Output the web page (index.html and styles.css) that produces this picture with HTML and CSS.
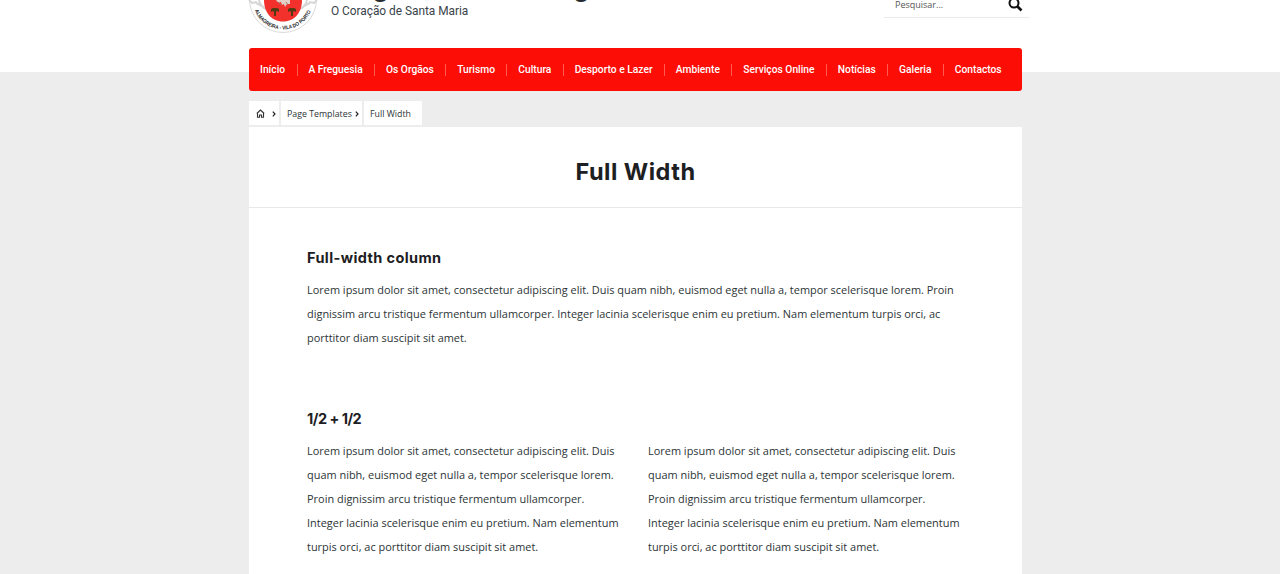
FILE: index.html
```html
<!DOCTYPE html>
<html lang="pt">
<head>
<meta charset="utf-8">
<title>Full Width</title>
<link rel="stylesheet" href="styles.css">
</head>
<body>
<header class="header">
  <div class="wrap brand-row">
    <svg class="crest" width="70" height="36" viewBox="0 0 70 36">
      <circle cx="35" cy="-1" r="33.5" fill="#fff" stroke="#dadada" stroke-width="1"/>
      <path d="M11 0c1 7 6 8 8 10M59 0c-1 7-6 8-8 10M8 3l6 3M62 3l-6 3M1 0l3 3 5-1M69 0l-3 3-5-1" fill="none" stroke="#d6d6d6" stroke-width="2"/>
      <path d="M16 0h38c0 12-7 21.500-19 21.500S16 12 16 0z" fill="#f2302c"/>
      <path d="M28 0c1 2 3 3 5 2l1 3 2-1 1 3 2-3 3 0V0z" fill="#e3cfc8"/>
      <path d="M30 2l3 3M38 2l2 3" stroke="#98766c"/>
      <g fill="#533b13"><path d="M23 9l2-1h4l2 1v3l-2-1-1 1v4h-2v-4l-1-1-2 1zM40 9l2-1h4l2 1v3l-2-1-1 1v4h-2v-4l-1-1-2 1z"/></g>
      <path id="motto" d="M6.800 10.500A30.500 30.500 0 0 0 64 8.500" fill="none"/>
      <text class="motto"><textPath href="#motto" textLength="71" lengthAdjust="spacingAndGlyphs">ALMAGREIRA - VILA DO PORTO</textPath></text>
    </svg>
    <div class="brand">
      <div class="site-name">Freguesia de Almagreira</div>
      <div class="tagline">O Coração de Santa Maria</div>
    </div>
    <form class="search">
      <span>Pesquisar...</span>
      <svg width="15" height="15" viewBox="0 0 15 15" fill="none" stroke="#111"><circle cx="6" cy="6" r="4.500" stroke-width="2"/><path d="M9.500 9.500l4 4" stroke-width="2.600"/></svg>
    </form>
  </div>
</header>
<main class="wrap">
  <nav class="nav">
    <a>Início</a><a>A Freguesia</a><a>Os Orgãos</a><a>Turismo</a><a>Cultura</a><a>Desporto e Lazer</a><a>Ambiente</a><a>Serviços Online</a><a>Notícias</a><a>Galeria</a><a>Contactos</a>
  </nav>
  <div class="crumbs">
    <span class="crumb home"><svg width="9" height="9" viewBox="0 0 9 9" fill="none" stroke="#333" stroke-width="1.100"><path d="M.8 4.500L4.500 1l3.700 3.500M1.500 4v4.300h2V6h2v2.300h2V4"/></svg><svg class="chev" width="4" height="6" viewBox="0 0 4 6"><path d="M.8.700L3 3 .8 5.300"/></svg></span>
    <span class="crumb page"><span>Page Templates</span><svg class="chev" width="4" height="6" viewBox="0 0 4 6"><path d="M.8.700L3 3 .8 5.300"/></svg></span>
    <span class="crumb current"><span>Full Width</span></span>
  </div>
  <article class="card">
    <h1 class="title"><span>Full Width</span></h1>
    <section class="block">
      <h2 class="h-full">Full-width column</h2>
      <p>Lorem ipsum dolor sit amet, consectetur adipiscing elit. Duis quam nibh, euismod eget nulla a, tempor scelerisque lorem. Proin<br>dignissim arcu tristique fermentum ullamcorper. Integer lacinia scelerisque enim eu pretium. Nam elementum turpis orci, ac<br>porttitor diam suscipit sit amet.</p>
    </section>
    <section class="block halves">
      <h2 class="h-half">1/2 + 1/2</h2>
      <div class="columns">
        <p>Lorem ipsum dolor sit amet, consectetur adipiscing elit. Duis<br>quam nibh, euismod eget nulla a, tempor scelerisque lorem.<br>Proin dignissim arcu tristique fermentum ullamcorper.<br>Integer lacinia scelerisque enim eu pretium. Nam elementum<br>turpis orci, ac porttitor diam suscipit sit amet.</p>
        <p>Lorem ipsum dolor sit amet, consectetur adipiscing elit. Duis<br>quam nibh, euismod eget nulla a, tempor scelerisque lorem.<br>Proin dignissim arcu tristique fermentum ullamcorper.<br>Integer lacinia scelerisque enim eu pretium. Nam elementum<br>turpis orci, ac porttitor diam suscipit sit amet.</p>
      </div>
    </section>
  </article>
</main>
</body>
</html>
```
FILE: styles.css
```css
* { box-sizing: border-box; }
body { margin: 0; height: 574px; overflow: hidden; background: #ededed; color: #2c3436; font-family: "Open Sans", sans-serif; }
.wrap { width: 773px; margin-left: 249px; }
.header { height: 72px; background: #fff; }
.brand-row { display: flex; height: 48px; }
.crest { flex: none; margin-left: -1px; }
.motto { font: 700 5.300px "Liberation Sans", sans-serif; fill: #222; }
.brand { margin-left: 13px; width: 300px; font-family: Roboto, sans-serif; white-space: nowrap; }
.site-name { height: 32px; margin-top: -28px; font: 700 29px/29px Roboto, sans-serif; color: #252b31; }
.tagline { font-size: 11.900px; line-height: 14px; letter-spacing: -.03px; color: #39434a; }
.search { display: flex; justify-content: space-between; flex: none; width: 146px; height: 18px; margin-left: 253px; padding: 0 7px 0 11px; border-bottom: 1px solid #ececec; font-size: 9px; line-height: 10px; color: #555; }
.search svg { margin-top: -3px; }
.nav { display: flex; align-items: center; height: 43px; margin-top: -24px; padding: 1px 0 0 11px; border-radius: 3px; background: #fc0d05; color: #fff; font: 500 10.250px/12px Roboto, sans-serif; white-space: nowrap; }
.nav a + a { margin-left: 11.500px; padding-left: 10.800px; border-left: 1px solid #ff5a50; }
.crumbs { display: flex; gap: 2px; height: 24px; margin-top: 10px; font-size: 8.800px; }
.crumb { display: flex; align-items: center; padding-top: 1px; background: #fff; white-space: nowrap; }
.home { width: 30px; padding-left: 7px; gap: 7px; }
.page { width: 81px; padding-left: 6px; gap: 3px; }
.current { width: 58px; padding-left: 6px; }
.chev { fill: none; stroke: #222; stroke-width: 1.200; }
.card { height: 460px; margin-top: 2px; background: #fff; }
.title { display: flex; justify-content: center; align-items: center; height: 81px; margin: 0; padding-top: 10px; border-bottom: 1px solid #e8e8e8; font: 700 23.500px/28px Inter, sans-serif; letter-spacing: .5px; color: #1c2022; }
.block { padding: 40px 58px 0; }
.block h2 { margin: 0 0 10px; font: 700 14.500px/20px Inter, sans-serif; color: #1c2022; }
.block .h-full { letter-spacing: .4px; }
.block .h-half { letter-spacing: -.5px; }
.block p { margin: 0; font-size: 10.945px; line-height: 24px; white-space: nowrap; }
.halves { padding-top: 59px; }
.columns { display: grid; grid-template-columns: 341px 1fr; }
```
